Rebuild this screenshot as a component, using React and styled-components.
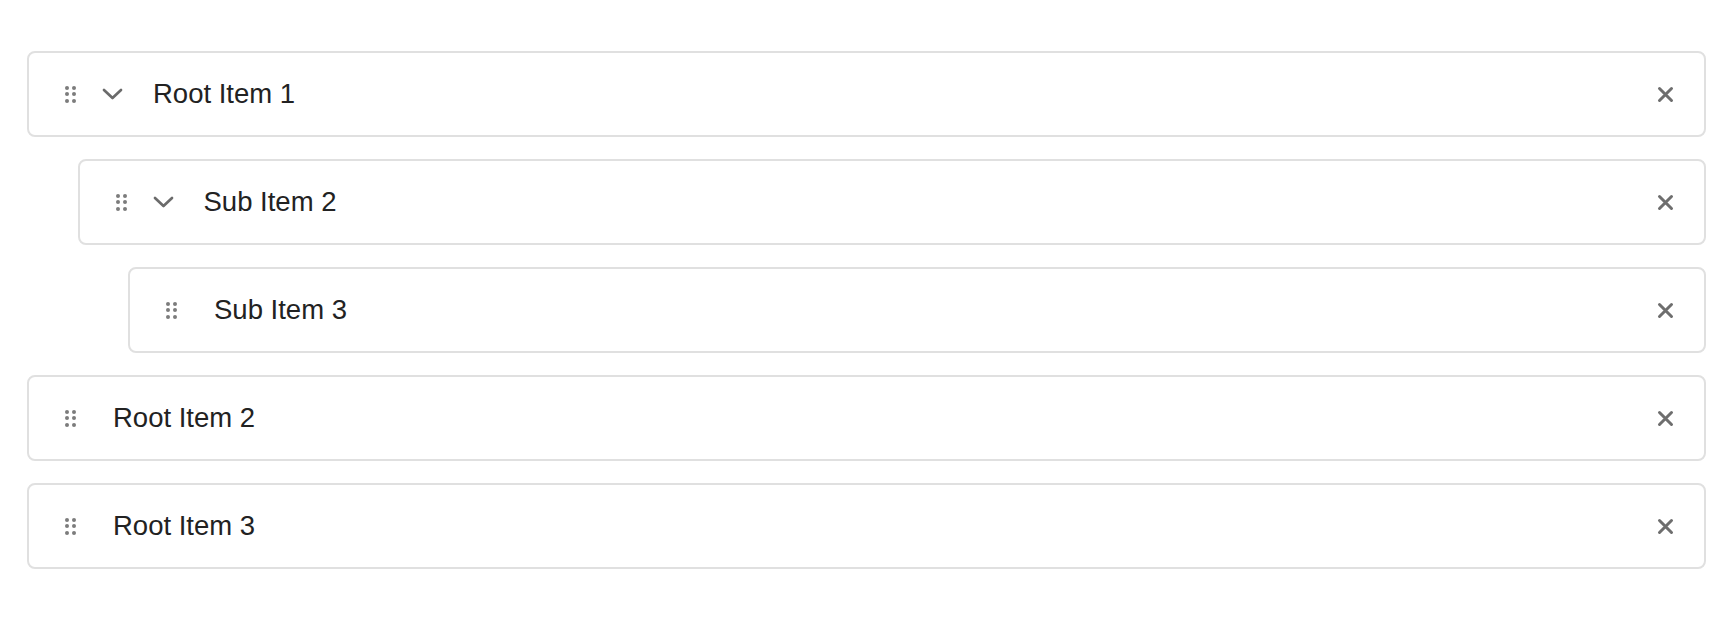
import styled, { createGlobalStyle } from "styled-components";

const GlobalStyle = createGlobalStyle`
  body {
    margin: 0;
    background: #ffffff;
    font-family: "Liberation Sans", Arial, Helvetica, sans-serif;
  }
`;

const items = [
  { id: 1, label: "Root Item 1", depth: 0, collapsible: true },
  { id: 2, label: "Sub Item 2", depth: 1, collapsible: true },
  { id: 3, label: "Sub Item 3", depth: 2, collapsible: false },
  { id: 4, label: "Root Item 2", depth: 0, collapsible: false },
  { id: 5, label: "Root Item 3", depth: 0, collapsible: false },
];

function TreeList() {
  return (
    <List>
      {items.map((item) => (
        <Card key={item.id} $depth={item.depth}>
          <Handle>
            {[0, 1, 2, 3, 4, 5].map((i) => (
              <Dot key={i} />
            ))}
          </Handle>
          {item.collapsible && (
            <Toggle>
              <svg width="21" height="12" viewBox="0 0 21 12">
                <path d="M2 2 L10.5 10 L19 2" fill="none" stroke="#6b6b6b" strokeWidth="2.7" strokeLinecap="round" strokeLinejoin="round" />
              </svg>
            </Toggle>
          )}
          <Label $shift={!item.collapsible}>{item.label}</Label>
          <Remove>
            <svg width="17" height="17" viewBox="0 0 17 17">
              <path d="M2.5 2.5 L14.5 14.5 M14.5 2.5 L2.5 14.5" stroke="#6e6e6e" strokeWidth="3" strokeLinecap="round" />
            </svg>
          </Remove>
        </Card>
      ))}
    </List>
  );
}

export default function App() {
  return (
    <>
      <GlobalStyle />
      <TreeList />
    </>
  );
}

const List = styled.div`
  display: flex;
  flex-direction: column;
  gap: 22px;
  padding: 51px 22px 0 27px;
`;

const Card = styled.div`
  display: flex;
  align-items: center;
  box-sizing: border-box;
  height: 86px;
  margin-left: ${(p) => p.$depth * 50.5}px;
  padding: 0 30px 0 36px;
  border: 2px solid #e0e0e0;
  border-radius: 8px;
  background: #fff;
`;

const Handle = styled.div`
  display: grid;
  grid-template-columns: repeat(2, 4px);
  grid-auto-rows: 4px;
  column-gap: 3px;
  row-gap: 2.5px;
  width: 11px;
  margin-right: 26px;
`;

const Dot = styled.span`
  width: 4px;
  height: 4px;
  border-radius: 50%;
  background: #7c7c7c;
`;

const Toggle = styled.div`
  display: flex;
  align-items: center;
  justify-content: center;
  width: 21px;
  margin-right: 30px;
`;

const Label = styled.div`
  flex: 1;
  margin-left: ${(p) => (p.$shift ? 11 : 0)}px;
  font-size: 27.5px;
  color: #222;
`;

const Remove = styled.div`
  display: flex;
  align-items: center;
  justify-content: center;
  width: 17px;
  height: 17px;
`;
